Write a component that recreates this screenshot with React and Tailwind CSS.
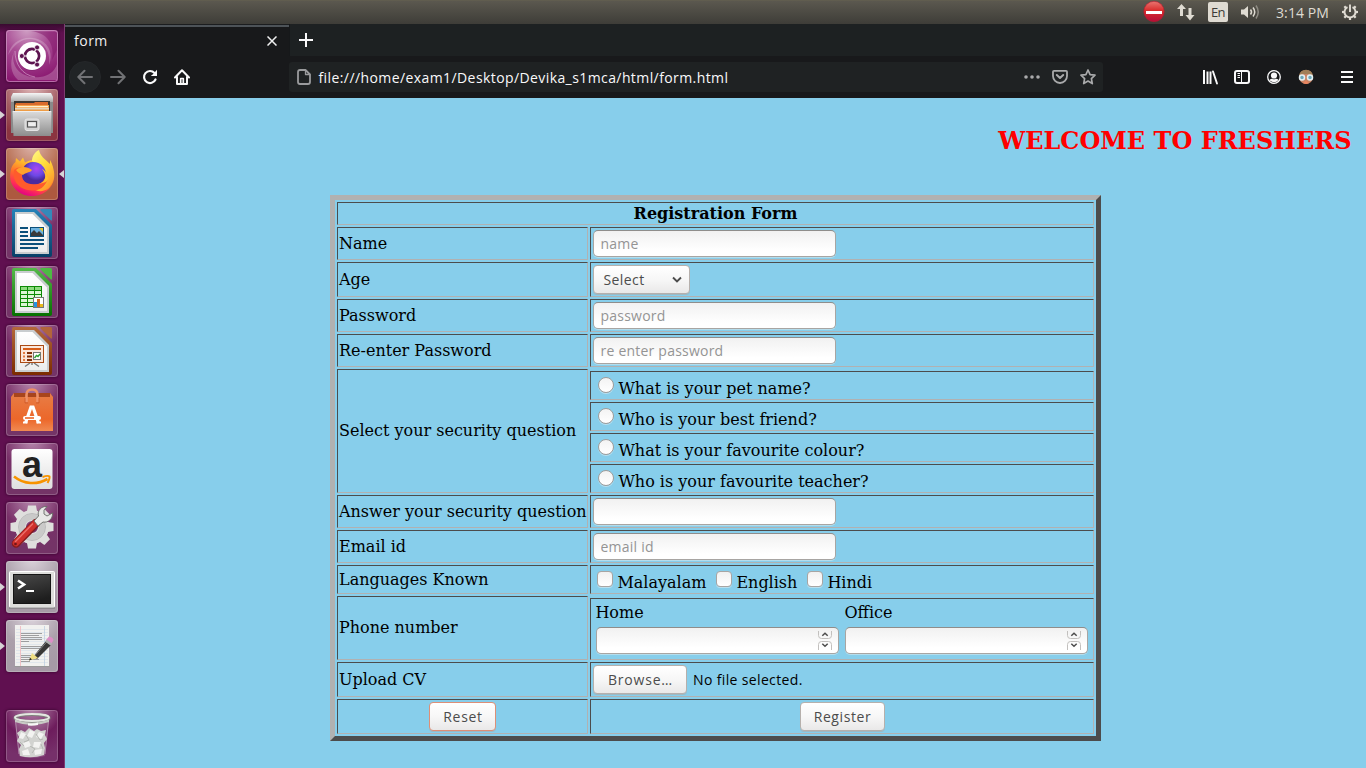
import React from "react";

const UI = "font-['Open_Sans','Noto_Sans',sans-serif]";

/* ---------- launcher icons, each on a 52 x 52 grid ---------- */

function Dash() {
  return (
    <svg viewBox="0 0 52 52" className="size-[52px]">
      <defs>
        <radialGradient id="dashGlow" cx="0.4" cy="0" r="1">
          <stop offset="0" stopColor="#cf9fc4" />
          <stop offset="0.45" stopColor="#a84c94" />
          <stop offset="1" stopColor="#8a1870" />
        </radialGradient>
      </defs>
      <rect width="52" height="52" rx="3" fill="url(#dashGlow)" />
      <path d="M2 25C5 11 20 4 34 10C44 15 47 25 43 35C45 20 36 10 24 9C15 9 8 15 2 25Z" fill="#fff" opacity=".22" />
      <path d="M8 22C4 36 15 49 34 47C43 46 49 41 51 34V50H12C5 44 3 33 8 22Z" fill="#fff" opacity=".22" />
      <path d="M25 1C42 3 49 15 46 30L51 20V2Z" fill="#7c0f64" opacity=".45" />
      <path d="M9 21C9 34 16 45 29 47" stroke="#e3b9db" strokeWidth=".8" fill="none" opacity=".7" />
      <circle cx="26" cy="26.5" r="14" fill="#5d0c4c" opacity=".35" />
      <circle cx="26" cy="26" r="14" fill="#fff" />
      <circle cx="26" cy="26" r="7" fill="none" stroke="#5d1450" strokeWidth="2.9" />
      <g stroke="#fff" strokeWidth="1.2">
        <path d="M26 26L16 26M26 26L31 17.3M26 26L31 34.7" />
      </g>
      <circle cx="26" cy="26" r="5.5" fill="#fff" />
      <g fill="#5d1450" stroke="#fff" strokeWidth=".8">
        <circle cx="15.8" cy="26" r="2.5" />
        <circle cx="31.1" cy="17.4" r="2.5" />
        <circle cx="31.1" cy="34.6" r="2.5" />
      </g>
      <rect x=".5" y=".5" width="51" height="51" rx="3" fill="none" stroke="#d7a8ce" opacity=".6" />
    </svg>
  );
}

function Tile({ id, top, mid, bottom, children }) {
  return (
    <svg viewBox="0 0 52 52" className="size-[52px] overflow-visible">
      <defs>
        <radialGradient id={id} cx="0.5" cy="-0.05" r="0.95">
          <stop offset="0" stopColor={top} />
          <stop offset="0.6" stopColor={mid} />
          <stop offset="1" stopColor={bottom} />
        </radialGradient>
      </defs>
      <rect width="52" height="52" rx="3" fill={`url(#${id})`} />
      <rect x=".5" y=".5" width="51" height="51" rx="3" fill="none" stroke="#fff" opacity=".2" />
      {children}
    </svg>
  );
}

function Files() {
  return (
    <Tile id="tFiles" top="#dfb8b8" mid="#a35b62" bottom="#8b3440">
      <defs>
        <linearGradient id="cab" x2="0" y2="1"><stop stopColor="#dcdcdc" /><stop offset="1" stopColor="#8d8d8d" /></linearGradient>
        <linearGradient id="cabTop" x2="0" y2="1"><stop stopColor="#f6f6f6" /><stop offset="1" stopColor="#aaa" /></linearGradient>
      </defs>
      <path d="M5 8L7 4H45L47 8V44H5Z" fill="#8a8a8a" />
      <path d="M5 8L7 4H45L47 8V13H5Z" fill="url(#cabTop)" />
      <rect x="8" y="12" width="36" height="11" fill="#3b3632" />
      <path d="M10 14H28L29 13H42V22H9V16Z" fill="#d96b2c" />
      <rect x="9" y="16" width="34" height="6" fill="#f2a24e" />
      <rect x="11" y="17" width="31" height="1.3" fill="#fff2cf" />
      <rect x="9" y="19" width="34" height="3" fill="#e3d5bd" />
      <rect x="9" y="20.5" width="34" height="2" fill="#ee9c45" />
      <path d="M6.500 22H45.500L45 47H7.500Z" fill="url(#cab)" />
      <path d="M7 22.500H45" stroke="#eee" />
      <rect x="19" y="30" width="14" height="11.500" rx="2" fill="#d2d2d2" stroke="#e5e5e5" />
      <rect x="21.500" y="32.500" width="9" height="5.500" fill="#eee" stroke="#555" strokeWidth="1.200" />
    </Tile>
  );
}

function Firefox() {
  return (
    <Tile id="tFox" top="#ddb4ab" mid="#b66d50" bottom="#ad593f">
      <defs>
        <linearGradient id="fxBody" x1="0.8" y1="0" x2="0.35" y2="1">
          <stop stopColor="#fff04a" /><stop offset=".3" stopColor="#ffb52c" /><stop offset=".58" stopColor="#ff6a2c" /><stop offset=".82" stopColor="#ff2c57" /><stop offset="1" stopColor="#df0088" />
        </linearGradient>
        <linearGradient id="fxTail" x1="0" y1="0" x2="0.6" y2="1"><stop stopColor="#fff889" /><stop offset=".5" stopColor="#ffdc3a" /><stop offset="1" stopColor="#ff9a2b" /></linearGradient>
        <radialGradient id="fxGlobe" cx=".6" cy=".3"><stop stopColor="#aa47f2" /><stop offset=".6" stopColor="#6d48e5" /><stop offset="1" stopColor="#4c2b9e" /></radialGradient>
      </defs>
      <path d="M4.500 24C5 19 7 16 9.500 14L10 10L14 13.500L17 9.500L19 14.500C23 12 27 11 31 14C37 11 42 14 48 24C50 38 39 48 26 48C13 48 2 38 4.500 24Z" fill="url(#fxBody)" />
      <path d="M26 13C26 8 29 4 33 2C34 8 39 11 44 16L44 12C49 20 50 32 43 40C38 44 31 44 28 41C36 40 42 36 42 29C41 21 34 18 26 13Z" fill="url(#fxTail)" />
      <path d="M16 27C16 19 20 14 27 14C35 14 40 20 40 27C39 34 33 37 26 37C19 36 16 32 16 27Z" fill="url(#fxGlobe)" />
      <path d="M8 22C11 19 14 19 18 20C15 24 15 29 17 32C20 36 26 37 32 36C38 35 40 31 40 27C42 36 36 43 26 42.500C14 42 6 34 8 22Z" fill="#ff5b2c" />
      <path d="M36 21C42 28 39 35 32 36C38 35 41 34 42 31C42 26 40 23 36 21Z" fill="#ffbe2e" />
      <path d="M10 22C14 18 21 18 26 22C24 25 20 24 17 27C15 26 12 25 10 22Z" fill="#ffa22b" />
    </Tile>
  );
}

function Doc({ id, light, dark, corner, children }) {
  return (
    <Tile id={`t${id}`} top="#b889ae" mid="#783068" bottom="#743467">
      <defs>
        <linearGradient id={`d${id}`} x2="0" y2="1"><stop stopColor={light} /><stop offset="1" stopColor={dark} /></linearGradient>
        <linearGradient id="paper" x2="0" y2="1"><stop stopColor="#fff" /><stop offset="1" stopColor="#ededed" /></linearGradient>
      </defs>
      <path d="M8 2H30L46 18V48Q46 50 44 50H8Q6 50 6 48V4Q6 2 8 2Z" fill={`url(#d${id})`} />
      <path d="M9 5H28L43 20V47H9Z" fill="#c9cdcf" />
      <path d="M11 7H26.500L41 21.500V45H11Z" fill="url(#paper)" />
      <path d="M35.500 2H44.500Q46 2 46 3.500V12.500Q46 14.500 44.500 13L34.500 3.500Q33.500 2 35.500 2Z" fill={corner} />
      {children}
    </Tile>
  );
}

function Writer() {
  return (
    <Doc id="Writer" light="#2582b8" dark="#073f67" corner="#3489b9">
      <path d="M14 21H22M14 25H22M14 29H22M14 33H38M14 37H38M14 41H32" stroke="#0b4f7a" strokeWidth="2" />
      <rect x="24.500" y="20.500" width="13" height="9" fill="#6db3df" stroke="#0b4f7a" />
      <path d="M33 21H37V25Z" fill="#e6c832" />
      <path d="M25 29V26L28 23L31 26L33 24L37 28V29Z" fill="#3a3a3a" />
    </Doc>
  );
}

function Calc() {
  return (
    <Doc id="Calc" light="#54b948" dark="#067000" corner="#4dba43">
      <rect x="14.500" y="20.500" width="21" height="20" fill="#ddf6d5" stroke="#0d8a05" />
      <rect x="15" y="21" width="20" height="3" fill="#8edb7f" />
      <path d="M15 24.500H35M15 28.500H35M15 32.500H35M15 36.500H35M21.500 21V40M28.500 21V40" stroke="#0d8a05" />
      <rect x="27.500" y="31.500" width="10" height="10" fill="#fff" stroke="#777" />
      <path d="M28 36H31V41H28Z" fill="#2593e2" /><path d="M31 33H34V41H31Z" fill="#d36519" /><path d="M34 38H37V41H34Z" fill="#e8b91b" />
    </Doc>
  );
}

function Impress() {
  return (
    <Doc id="Impress" light="#b4683b" dark="#7b2b00" corner="#b2653b">
      <path d="M26 37V40M24 38L19 41.500M28 38L33 41.500" stroke="#777" strokeWidth="1.400" />
      <rect x="14.500" y="20.500" width="23" height="17" fill="#fbe7db" stroke="#aa4a15" />
      <rect x="17" y="23" width="18" height="2" fill="#d75d18" />
      <path d="M17 28H19M17 31.500H19M17 35H19" stroke="#e27b40" strokeWidth="2" />
      <path d="M21 28H26M21 31.500H26M21 35H26" stroke="#823008" strokeWidth="2" />
      <rect x="27.500" y="27.500" width="7" height="7" fill="#fff" stroke="#777" />
      <path d="M28.500 33L30.500 30.500L32 31.500L34 29" stroke="#2fa336" strokeWidth="1.400" fill="none" />
    </Doc>
  );
}

function Software() {
  return (
    <Tile id="tSoft" top="#b889ae" mid="#783068" bottom="#743467">
      <defs><linearGradient id="bag" x2="0" y2="1"><stop stopColor="#e87a42" /><stop offset=".65" stopColor="#ec672a" /><stop offset="1" stopColor="#f08a52" /></linearGradient></defs>
      <path d="M8 9H44L47 13H5Z" fill="#a8451c" />
      <rect x="5" y="13" width="42" height="34" fill="url(#bag)" />
      <path d="M5 13L8 9V13Z M47 13L44 9V13Z" fill="#e57b4a" />
      <path d="M20.500 18V11Q20.500 5.500 26 5.500T31.500 11V18" fill="none" stroke="#ee9168" strokeWidth="2.600" />
      <path d="M19 14V19H22M33 14V19H30" stroke="#c9572a" fill="none" strokeWidth=".7" />
      <path d="M19.500 39L25 23H27L32.500 39" fill="none" stroke="#fff" strokeWidth="3.200" />
      <path d="M17 38.500H21.500M30.500 38.500H35" stroke="#fff" strokeWidth="2" />
      <rect x="17" y="32" width="18" height="4" rx="2" fill="#fff" />
      <path d="M19 34H28" stroke="#ec672a" strokeWidth="1.600" />
    </Tile>
  );
}

function Amazon() {
  return (
    <Tile id="tAmz" top="#b889ae" mid="#783068" bottom="#743467">
      <defs><linearGradient id="amz" x2="0" y2="1"><stop stopColor="#fff" /><stop offset="1" stopColor="#dfdfdf" /></linearGradient></defs>
      <rect x="5.500" y="6" width="41" height="40" rx="3" fill="url(#amz)" />
      <text x="26" y="34" textAnchor="middle" fontFamily="Liberation Sans" fontWeight="700" fontSize="37" textLength="20" lengthAdjust="spacingAndGlyphs" fill="#222">a</text>
      <path d="M8 33.500C18 41.500 31 42 41.500 36" fill="none" stroke="#f79400" strokeWidth="2.600" />
      <path d="M36.500 34Q42 32 43.500 33.500Q44 35.500 41.500 40" fill="none" stroke="#f79400" strokeWidth="2" />
    </Tile>
  );
}

function Settings() {
  return (
    <Tile id="tSet" top="#b889ae" mid="#783068" bottom="#743467">
      <g fill="#dfdfdd">
        {[0, 45, 90, 135, 180, 225, 270, 315].map((a) => (
          <path key={a} d="M21 9L22 3.500H30L31 9Z" transform={`rotate(${a} 26 25)`} />
        ))}
        <path fillRule="evenodd" d="M26 8A17 17 0 1 0 26 42A17 17 0 1 0 26 8ZM26 19A6 6 0 1 1 26 31A6 6 0 1 1 26 19Z" />
      </g>
      <circle cx="26" cy="25" r="10" fill="none" stroke="#b6b6b5" strokeWidth="6" opacity=".5" />
      <circle cx="26" cy="25" r="13.500" fill="none" stroke="#bbb" />
      <path d="M10 41.500L30 21" stroke="#841b1e" strokeWidth="8.500" strokeLinecap="round" />
      <path d="M10 41L29.500 21" stroke="#cf302b" strokeWidth="6.500" strokeLinecap="round" />
      <path d="M9 40L27 21.500" stroke="#ee706b" strokeWidth="1.300" />
      <circle cx="9.500" cy="42" r="1.300" fill="#701517" />
      <path d="M28 19L32 24L37 20C42 21 47 17 46.500 11L41 14L38 12L38 8L41 4.500C35 4 31 9 32.500 14Z" fill="#e9e9e7" stroke="#686b67" strokeWidth=".9" />
    </Tile>
  );
}

function Terminal() {
  return (
    <Tile id="tTerm" top="#dcd4dc" mid="#aba0ab" bottom="#a69ba6">
      <defs><linearGradient id="crt" x2=".3" y2="1"><stop stopColor="#4a4a4a" /><stop offset="1" stopColor="#1e1e1e" /></linearGradient></defs>
      <rect x="3.500" y="10.500" width="45" height="36" rx="1" fill="#dededc" stroke="#fff" />
      <path d="M3 47H49" stroke="#777" />
      <rect x="7.500" y="13.500" width="37" height="29" fill="url(#crt)" stroke="#151515" />
      <path d="M12 19.500L18 23.500L12 27.500" fill="none" stroke="#fff" strokeWidth="2.600" />
      <path d="M20 30H28" stroke="#fff" strokeWidth="2" />
    </Tile>
  );
}

function Editor() {
  return (
    <Tile id="tEdit" top="#dcd4dc" mid="#aba0ab" bottom="#a69ba6">
      <rect x="9" y="5" width="34" height="41" fill="#f1f1ef" />
      <path d="M8.500 46.500H43.500" stroke="#999" />
      <path d="M10 9.500H42M10 12.500H42M10 15.500H42M10 18.500H42M10 21.500H42M10 24.500H42M10 27.500H42M10 30.500H42M10 33.500H42M10 36.500H42M10 39.500H42M10 42.500H42" stroke="#d5dfe8" strokeWidth=".6" />
      <path d="M14.500 6V46" stroke="#f0b6bb" strokeWidth=".8" /><path d="M38.500 6V46" stroke="#b9cbe0" strokeWidth=".7" />
      <path d="M15 13.500H36M15 15.500H33M15 17.500H36M15 19.500H36M15 21.500H23M15 26.500H36M15 28.500H34M15 35.500H32M15 37.500H29M15 39.500H33M15 41.500H24" stroke="#8a8a8a" strokeWidth=".8" />
      <path d="M27 37L40 21L45 25L31 39Z" fill="#373737" /><path d="M28 36.500L41 21.500" stroke="#7f7f7f" />
      <path d="M40 20L43 16.500Q47 17 47.500 20L45 24.500Z" fill="#dc8fc6" />
      <path d="M39 21.500L40.500 19.500L46 23.500L44.500 25.500Z" fill="#aeb0b1" />
      <path d="M23 40.500L26 33L32 38Z" fill="#efdf83" /><path d="M23 40.500L24 37.800L26 39.500Z" fill="#222" />
    </Tile>
  );
}

function Trash() {
  return (
    <Tile id="tTrash" top="#b889ae" mid="#6d1c5c" bottom="#76306a">
      <path d="M9 10L13 46Q26 50 39 46L43 10Z" fill="#fff" opacity=".14" />
      <path d="M9.500 11L13 44M42.500 11L39 44" stroke="#cdb8ca" opacity=".6" />
      <path d="M11 23L15 20L19 22L23 18L28 21L31 19L35 21L40 20L39 25L41 29L38 33L39 38L38 45Q26 49 14 46L13 39L15 35L11 31L13 27Z" fill="#d2d3d0" />
      <path d="M15 22L20 24L17 29L13 28ZM24 20L29 22L26 28L21 26ZM33 22L38 24L35 29L30 27ZM17 33L23 31L25 36L19 38ZM28 32L35 32L33 38L27 37ZM16 41L22 39L24 45L17 45ZM28 40L36 39L35 44L29 45Z" fill="#f3f3f1" />
      <path d="M20 25L23 30L18 32M30 24L34 30L37 29M24 36L29 39L26 43M14 32L18 36M35 34L37 39" stroke="#b5b7b3" fill="none" />
      <ellipse cx="26" cy="8" rx="17" ry="3.500" fill="none" stroke="#7e817c" strokeWidth="3.200" />
      <ellipse cx="26" cy="7.500" rx="17" ry="3.500" fill="none" stroke="#e5e6e2" strokeWidth="1.900" />
      <path d="M9 9.500Q26 16 43 9.500V12Q26 18 9 12Z" fill="#c8cac5" />
      <path d="M22 13.300Q28 14 32 12.600V15Q28 16 22 15.600Z" fill="#f7f7f6" />
    </Tile>
  );
}

function LauncherItem({ children, running, focused, last }) {
  return (
    <div className={`flex h-[52px] w-full shrink-0 items-center ${last ? "mt-[31px]" : "mb-[7px]"}`}>
      <div className="flex w-[6px] shrink-0">
        {running && <svg viewBox="0 0 6 8" className="h-2 w-[6px]"><path d="M0 0L5 4L0 8Z" fill="#d7d3d6" /></svg>}
      </div>
      <div className="size-[52px] shrink-0 rounded-[3px] shadow-[0_0_3px_#32052a]">{children}</div>
      <div className="flex w-[6px] shrink-0 justify-end">
        {focused && <svg viewBox="0 0 6 8" className="h-2 w-[6px]"><path d="M6 0L1 4L6 8Z" fill="#d7d3d6" /></svg>}
      </div>
    </div>
  );
}

function Launcher() {
  return (
    <nav className="flex w-[65px] shrink-0 flex-col border-r border-[#7d3b70] bg-[linear-gradient(#390a30_0px,#601050_9px,#601050_100%)] pt-[6px]">
      <LauncherItem><Dash /></LauncherItem>
      <LauncherItem running><Files /></LauncherItem>
      <LauncherItem running focused><Firefox /></LauncherItem>
      <LauncherItem><Writer /></LauncherItem>
      <LauncherItem><Calc /></LauncherItem>
      <LauncherItem><Impress /></LauncherItem>
      <LauncherItem><Software /></LauncherItem>
      <LauncherItem><Amazon /></LauncherItem>
      <LauncherItem><Settings /></LauncherItem>
      <LauncherItem running><Terminal /></LauncherItem>
      <LauncherItem running><Editor /></LauncherItem>
      <LauncherItem last><Trash /></LauncherItem>
    </nav>
  );
}

/* ---------- system panel ---------- */

function SystemPanel() {
  return (
    <header className={`flex h-6 shrink-0 items-center bg-[linear-gradient(#66624f_0px,#5b584f_1px,#3e3d38_24px)] pl-[1143px] text-[#dfdbd2] ${UI}`}>
      <svg viewBox="0 0 22 24" className="h-6 w-[22px] shrink-0">
        <defs><linearGradient id="stop" x2="0" y2="1"><stop stopColor="#e97771" /><stop offset=".45" stopColor="#d92d2d" /><stop offset="1" stopColor="#b50c38" /></linearGradient></defs>
        <circle cx="11" cy="11.500" r="10.200" fill="url(#stop)" stroke="#b5172e" strokeWidth=".6" />
        <rect x="3" y="11" width="16" height="3" fill="#fff" />
      </svg>
      <svg viewBox="0 0 18 18" className="ml-3 size-[18px] shrink-0 fill-[#dfdbd2]">
        <path d="M0 6L4.500 1L9 6H6V13H3V6ZM8.500 12H11.500V5H14.500V12H17.500L13 17.500Z" />
      </svg>
      <div className="ml-[13px] flex h-5 w-5 shrink-0 items-center justify-center rounded-[2px] bg-[#dfdbd2] pt-px text-[13px] tracking-[-0.5px] text-[#3c3b37]">En</div>
      <svg viewBox="0 0 20 16" className="ml-[12px] h-4 w-5 shrink-0">
        <path d="M1 5.500H4L8 2V14L4 10.500H1Z" fill="#dfdbd2" />
        <path d="M10.500 5.500Q12.500 8 10.500 10.500M13 3.500Q16.500 8 13 12.500" fill="none" stroke="#dfdbd2" strokeWidth="1.500" />
        <path d="M16 1.500Q20.500 8 16 14.500" fill="none" stroke="#8e8b83" strokeWidth="1.500" />
      </svg>
      <span className="ml-[16px] w-[54px] shrink-0 whitespace-nowrap text-[14px] tracking-[0.1px]">3:14 PM</span>
      <svg viewBox="0 0 18 18" className="ml-[11px] size-[18px] shrink-0" fill="none" stroke="#dfdbd2" strokeWidth="1.900">
        <path d="M6.500 4.100A5.500 5.500 0 1 0 11.500 4.100M9 1.500V9" />
        {[45, 90, 135, 180, 225, 270, 315].map((a) => (
          <path key={a} d="M9 1V3.500" strokeWidth="2.200" transform={`rotate(${a} 9 9)`} />
        ))}
      </svg>
    </header>
  );
}

/* ---------- browser chrome ---------- */

function TabBar() {
  return (
    <div className={`flex h-8 shrink-0 bg-[#1d2122] ${UI}`}>
      <div className="flex w-[225px] items-center border-r border-[#16181a] bg-[#18191b] bg-[linear-gradient(#1b1d1f_0px,#1b1d1f_1px,#4d5358_1px,#4d5358_3px,#18191b_3px)] pl-[9px] text-[#f0f0f1]">
        <span className="flex-1 pt-px text-[14px] tracking-[0.5px]">form</span>
        <svg viewBox="0 0 10 10" className="mr-3 mt-[2px] size-[10px]"><path d="M.5.5L9.500 9.500M9.500.5L.5 9.500" stroke="#f0f0f1" strokeWidth="1.500" /></svg>
      </div>
      <svg viewBox="0 0 14 14" className="ml-[9px] mt-[9px] size-[14px]"><path d="M7 0V14M0 7H14" stroke="#f9f9fa" strokeWidth="2" /></svg>
    </div>
  );
}

function ToolBar() {
  return (
    <div className={`flex h-[42px] shrink-0 items-center bg-[#18191b] pl-1 text-[#f9f9fa] ${UI}`}>
      <div className="flex size-8 items-center justify-center rounded-full border border-[#25272a] bg-[#212426]">
        <svg viewBox="0 0 16 16" className="size-4" fill="none" stroke="#717275" strokeWidth="2" strokeLinecap="round" strokeLinejoin="round"><path d="M15 8H1.500M7.500 1.800L1.300 8L7.500 14.200" /></svg>
      </div>
      <svg viewBox="0 0 16 16" className="ml-[9px] size-4" fill="none" stroke="#717275" strokeWidth="2" strokeLinecap="round" strokeLinejoin="round"><path d="M1 8H14.500M8.500 1.800L14.700 8L8.500 14.200" /></svg>
      <svg viewBox="0 0 16 16" className="ml-4 size-4"><path d="M13.500 10.500A6 6 0 1 1 12.500 4" fill="none" stroke="#f9f9fa" strokeWidth="2.200" strokeLinecap="round" /><path d="M15 .8V7H8.800L11.500 4.800L13 3Z" fill="#f9f9fa" /></svg>
      <svg viewBox="0 0 16 16" className="ml-4 size-4" fill="none" stroke="#f9f9fa" strokeWidth="2" strokeLinecap="round" strokeLinejoin="round"><path d="M1 8.500L8 1.300L15 8.500M3 8V15H13V8" /><path d="M6.700 14V9.500H9.300V14" strokeWidth="1.700" /></svg>
      <div className="ml-[99px] flex h-[30px] w-[814px] items-center rounded-[3px] bg-[#1f2223] pl-2">
        <svg viewBox="0 0 14 16" className="h-4 w-[14px]" fill="none" stroke="#9a9b9d" strokeWidth="1.800" strokeLinejoin="round"><path d="M3 1H8.500L13 5.500V13Q13 15 11 15H3Q1 15 1 13V3Q1 1 3 1Z" /><path d="M8.500 1V5.500H13" strokeWidth="1.300" /></svg>
        <span className="ml-[7.500px] flex-1 whitespace-nowrap text-[14px] tracking-[0.41px]">file:///home/exam1/Desktop/Devika_s1mca/html/form.html</span>
        <svg viewBox="0 0 16 4" className="h-1 w-4 fill-[#a9aaab]"><circle cx="2" cy="2" r="1.800" /><circle cx="8" cy="2" r="1.800" /><circle cx="14" cy="2" r="1.800" /></svg>
        <svg viewBox="0 0 16 16" className="ml-3 size-4" fill="none" stroke="#a9aaab" strokeWidth="2" strokeLinecap="round" strokeLinejoin="round"><path d="M2 1.800H14Q15 1.800 15 2.800V7A7 7 0 0 1 1 7V2.800Q1 1.800 2 1.800Z" strokeWidth="1.800" /><path d="M4.800 6L8 9L11.200 6" /></svg>
        <svg viewBox="0 0 16 16" className="ml-3 mr-[7px] size-4" fill="none" stroke="#a9aaab" strokeWidth="1.700" strokeLinejoin="round"><path d="M8 1L10.100 5.600L15 6.200L11.400 9.600L12.300 14.600L8 12.100L3.700 14.600L4.600 9.600L1 6.200L5.900 5.600Z" /></svg>
      </div>
      <svg viewBox="0 0 16 16" className="ml-[99px] size-4" stroke="#f9f9fa" strokeWidth="2"><path d="M2 1V15M5.500 2.500V15M8.500 2.500V15" strokeWidth="2" /><path d="M11 2.500L15 14.500" strokeLinecap="round" strokeWidth="1.900" /></svg>
      <svg viewBox="0 0 16 16" className="ml-4 size-4" fill="none" stroke="#f9f9fa"><rect x="1" y="2" width="14" height="12" rx="2" strokeWidth="2" /><path d="M7.500 2V14" strokeWidth="1" /><path d="M3.500 4.500H6M3.500 6.500H6M3.500 8.500H6" strokeWidth="1" /></svg>
      <svg viewBox="0 0 16 16" className="ml-4 size-4"><circle cx="8" cy="8" r="6.300" fill="none" stroke="#f9f9fa" strokeWidth="1.300" /><circle cx="8" cy="6.500" r="3.100" fill="#f9f9fa" /><path d="M3.500 11Q5 9.500 6 9.700Q8 10.700 10 9.700Q11.500 9.700 12.500 11Q10.500 13.300 8 13.300Q5.500 13.300 3.500 11Z" fill="#f9f9fa" /></svg>
      <svg viewBox="0 0 16 16" className="ml-4 size-4"><circle cx="8" cy="8" r="7" fill="#c98566" /><path d="M1 7Q2 .8 8 .8Q14 .8 15 7L11 5H5Z" fill="#a17f58" /><circle cx="4" cy="8.500" r="2.500" fill="#6fa9ba" stroke="#e3f1f4" strokeWidth="1.500" /><circle cx="12" cy="8.500" r="2.500" fill="#6fa9ba" stroke="#e3f1f4" strokeWidth="1.500" /><path d="M5 14Q8 16 11 14L8 11.500Z" fill="#ea8560" /></svg>
      <svg viewBox="0 0 12 12" className="ml-[27px] size-3" stroke="#f9f9fa" strokeWidth="2"><path d="M0 1H12M0 6H12M0 11H12" /></svg>
    </div>
  );
}

/* ---------- form ---------- */

const CELL = "flex border border-t-[#4c4c4c] border-l-[#4c4c4c] border-r-[#b1b1b1] border-b-[#b1b1b1]";
const FIELD = `h-[27px] w-[243px] rounded-[5px] border border-[#a8a5a2] border-t-[#8f8d8b] bg-[linear-gradient(#f1f1f1,#fff_80%)] pl-[6.500px] pr-[6px] text-[14px] tracking-[0.22px] outline-none placeholder:text-[#949494] shadow-[0_1px_0_#b4dded] ${UI}`;
const BUTTON = `flex h-[29px] items-center justify-center rounded-[4px] border border-[#b6b0ac] bg-[linear-gradient(#fff,#f7f7f7_50%,#e9e8e8)] text-[14px] text-[#4c4c4c] shadow-[0_1px_0_#9db9c5] ${UI}`;

function Label({ children, className = "" }) {
  return <div className={`${CELL} w-[251px] items-center whitespace-nowrap pl-px ${className}`}>{children}</div>;
}

function Cell({ children, className = "" }) {
  return <div className={`${CELL} w-[504px] ${className}`}>{children}</div>;
}

function Row({ children, className = "h-[33px]" }) {
  return <div className={`flex gap-[2px] ${className}`}>{children}</div>;
}

function FieldRow({ label, placeholder }) {
  return (
    <Row>
      <Label>{label}</Label>
      <Cell className="pl-[2px] pt-[2px]"><input className={FIELD} placeholder={placeholder} /></Cell>
    </Row>
  );
}

function Question({ children }) {
  return (
    <Cell className="h-[29px] items-end pb-px pl-[7px]">
      <span className="mb-[5px] mr-[4.400px] size-4 rounded-full border border-[#a09d9b] bg-[linear-gradient(#f3f3f3,#fff)] shadow-[0_1px_0_#b9dfee]" />
      <span className="leading-[19px]">{children}</span>
    </Cell>
  );
}

function Check({ children, className = "" }) {
  return (
    <div className={`flex items-end ${className}`}>
      <span className="mb-[5px] mr-[4.400px] size-4 rounded-[4px] border border-[#a8a5a3] bg-[linear-gradient(#f1f1f1,#fff)] shadow-[0_1px_0_#b9dfee]" />
      <span className="leading-[19px]">{children}</span>
    </div>
  );
}

function Phone({ label }) {
  return (
    <div className="flex w-[243px] flex-col">
      <span className="-ml-[0.600px] h-[19px] leading-[19px]">{label}</span>
      <div className="mt-[5px] flex h-[27px] items-start justify-end rounded-[5px] border border-[#a8a5a2] border-t-[#8f8d8b] bg-[linear-gradient(#f1f1f1,#fff_80%)] pr-[6px] pt-[2px] shadow-[0_1px_0_#b4dded]">
        <svg viewBox="0 0 14 21" className="h-[21px] w-[14px]" fill="none">
          <path d="M.5 1V5.500Q.5 8.500 3.500 8.500H10.500Q13.500 8.500 13.500 5.500V1M.5 20V14.500Q.5 11.500 3.500 11.500H10.500Q13.500 11.500 13.500 14.500V20" stroke="#c2c0be" />
          <path d="M4.300 5.800L7 3.300L9.700 5.800M4.300 13.800L7 16.300L9.700 13.800" stroke="#4c4c4c" strokeWidth="1.500" />
        </svg>
      </div>
    </div>
  );
}

function RegistrationForm() {
  return (
    <form className="ml-[265px] flex w-[771px] flex-col gap-[2px] border-[5px] border-t-[#b1b1b1] border-l-[#b1b1b1] border-r-[#4c4c4c] border-b-[#4c4c4c] p-[2px] text-[16px] leading-[19px]">
      <div className={`${CELL} h-[23px] items-center justify-center font-bold`}>Registration Form</div>
      <FieldRow label="Name" placeholder="name" />
      <Row className="h-[35px]">
        <Label>Age</Label>
        <Cell className="pl-[2px] pt-[2px]">
          <div className={`${BUTTON} w-[97px] pl-[2px]`}>
            <span className="w-[68px] tracking-[0.4px]">Select</span>
            <svg viewBox="0 0 10 8" className="h-2 w-[10px]"><path d="M1 1.500L5 5.500L9 1.500" fill="none" stroke="#4c4c4c" strokeWidth="1.900" /></svg>
          </div>
        </Cell>
      </Row>
      <FieldRow label="Password" placeholder="password" />
      <FieldRow label="Re-enter Password" placeholder="re enter password" />
      <Row className="h-[124px]">
        <Label className="pb-[2px]">Select your security question</Label>
        <div className="flex flex-col gap-[2px] pt-[2px]">
          <Question>What is your pet name?</Question>
          <Question>Who is your best friend?</Question>
          <Question>What is your favourite colour?</Question>
          <Question>Who is your favourite teacher?</Question>
        </div>
      </Row>
      <FieldRow label="Answer your security question" placeholder="" />
      <FieldRow label="Email id" placeholder="email id" />
      <Row className="h-[29px]">
        <Label>Languages Known</Label>
        <Cell className="items-end pb-px pl-[6px]">
          <Check className="w-[119px]">Malayalam</Check>
          <Check className="w-[91px]">English</Check>
          <Check>Hindi</Check>
        </Cell>
      </Row>
      <Row className="h-[64px]">
        <Label className="pb-[2px]">Phone number</Label>
        <div className="flex pt-[2px]">
          <Cell className="gap-[6px] pl-[5px] pt-[4px]">
            <Phone label="Home" />
            <Phone label="Office" />
          </Cell>
        </div>
      </Row>
      <Row className="h-[35px]">
        <Label>Upload CV</Label>
        <Cell className="pl-[2px] pt-[2px]">
          <div className={`${BUTTON} w-[94px] pl-px tracking-[0.800px]`}>Browse…</div>
          <span className={`ml-[6px] text-[14px] leading-[29px] tracking-[0.360px] ${UI}`}>No file selected.</span>
        </Cell>
      </Row>
      <Row className="h-[35px]">
        <div className={`${CELL} w-[251px] justify-center pt-[2px]`}>
          <div className={`${BUTTON} w-[67px] border-[#dd8f77] pl-px tracking-[0.700px]`}>Reset</div>
        </div>
        <Cell className="justify-center pt-[2px]">
          <div className={`${BUTTON} w-[85px] pl-px tracking-[0.600px]`}>Register</div>
        </Cell>
      </Row>
    </form>
  );
}

export default function App() {
  return (
    <div className="flex h-[768px] w-[1366px] flex-col overflow-hidden">
      <SystemPanel />
      <div className="flex min-h-0 flex-1">
        <Launcher />
        <main className="flex w-[1301px] flex-col">
          <TabBar />
          <ToolBar />
          <section className="flex-1 bg-[#87ceeb] font-['DejaVu_Serif',serif] text-black">
            <h1 className="flex h-[97px] justify-end pr-[14.500px] pt-[29px] text-[24px] font-bold leading-[28px] text-[#ff0000]">WELCOME TO FRESHERS</h1>
            <RegistrationForm />
          </section>
        </main>
      </div>
    </div>
  );
}
